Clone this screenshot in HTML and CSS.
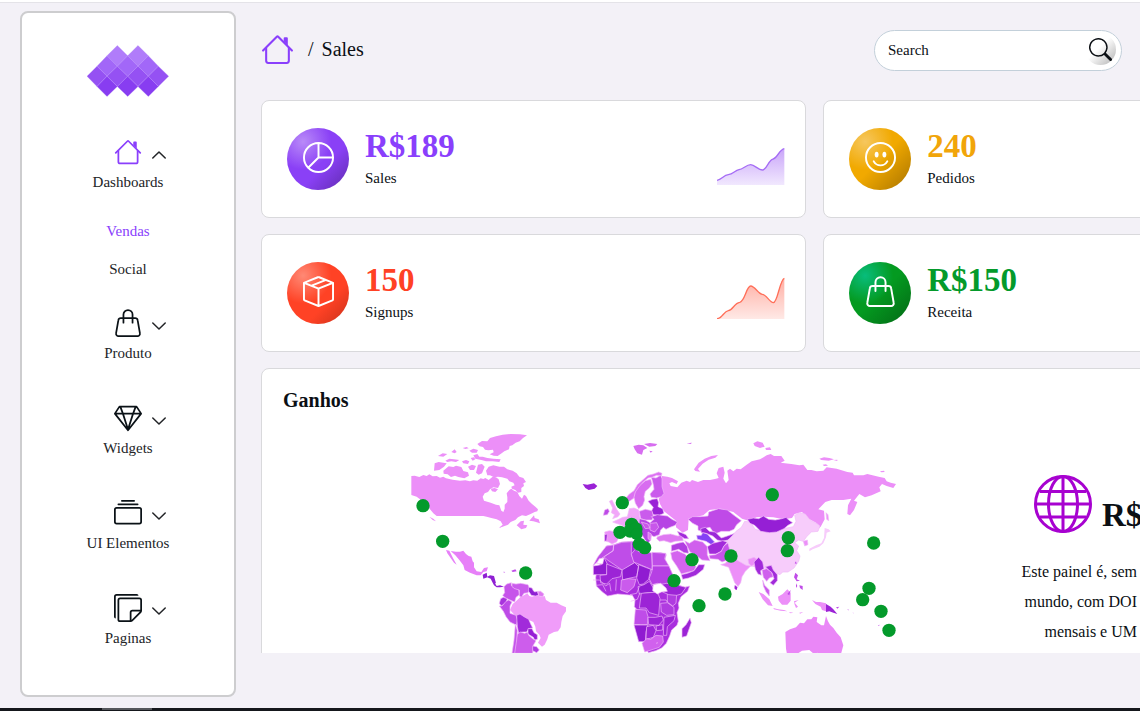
FILE: index.html
```html
<!DOCTYPE html>
<html lang="pt-BR">
<head>
<meta charset="utf-8">
<meta name="viewport" content="width=device-width, initial-scale=1">
<title>Sales</title>
<link rel="stylesheet" href="styles.css">
</head>
<body>
<svg class="sprite" aria-hidden="true">
  <symbol id="house" viewBox="0 0 16 16"><path d="M2 13.5V7h1v6.5a.5.5 0 0 0 .5.5h9a.5.5 0 0 0 .5-.5V7h1v6.5a1.5 1.5 0 0 1-1.5 1.5h-9A1.5 1.5 0 0 1 2 13.5zm11-11V6l-2-2V2.5a.5.5 0 0 1 .5-.5h1a.5.5 0 0 1 .5.5z"/><path d="M7.293 1.5a1 1 0 0 1 1.414 0l6.647 6.646a.5.5 0 0 1-.708.708L8 2.207 1.354 8.854a.5.5 0 1 1-.708-.708L7.293 1.5z"/></symbol>
  <symbol id="bag" viewBox="0 0 16 16"><path fill="none" stroke="currentColor" stroke-linecap="round" stroke-linejoin="round" d="M3.9 5.2h8.2a1.4 1.4 0 0 1 1.4 1.2l1.3 7.4a1.4 1.4 0 0 1-1.4 1.7H2.6a1.4 1.4 0 0 1-1.4-1.7l1.3-7.4a1.4 1.4 0 0 1 1.4-1.2zM5.4 7.8V3.2a2.6 2.6 0 0 1 5.2 0v4.6"/></symbol>
  <symbol id="gem" viewBox="0 0 16 16"><path fill="none" stroke="currentColor" stroke-linejoin="round" d="M3.1 1.5h9.8l2.6 4L8 15 .5 5.5zM.5 5.5h15M3.6 1.5l1.5 4L8 14.6l2.9-9.1 1.5-4"/></symbol>
  <symbol id="stack" viewBox="0 0 16 16"><path d="M2.5 3.5a.5.5 0 0 1 0-1h11a.5.5 0 0 1 0 1h-11zm2-2a.5.5 0 0 1 0-1h7a.5.5 0 0 1 0 1h-7zM0 13a1.5 1.5 0 0 0 1.5 1.5h13A1.5 1.5 0 0 0 16 13V6a1.5 1.5 0 0 0-1.5-1.5h-13A1.5 1.5 0 0 0 0 6v7zm1.5.5A.5.5 0 0 1 1 13V6a.5.5 0 0 1 .5-.5h13a.5.5 0 0 1 .5.5v7a.5.5 0 0 1-.5.5h-13z"/></symbol>
  <symbol id="notes" viewBox="0 0 16 16"><path d="M1.5 0A1.5 1.5 0 0 0 0 1.5V13a1 1 0 0 0 1 1V1.5a.5.5 0 0 1 .5-.5H14a1 1 0 0 0-1-1H1.5z"/><path d="M3.5 2A1.5 1.5 0 0 0 2 3.5v11A1.5 1.5 0 0 0 3.5 16h6.086a1.5 1.5 0 0 0 1.06-.44l4.915-4.914A1.5 1.5 0 0 0 16 9.586V3.5A1.5 1.5 0 0 0 14.5 2h-11zM3 3.5a.5.5 0 0 1 .5-.5h11a.5.5 0 0 1 .5.5V9h-4.5A1.5 1.5 0 0 0 9 10.5V15H3.5a.5.5 0 0 1-.5-.5v-11zm7 11.293V10.5a.5.5 0 0 1 .5-.5h4.293L10 14.793z"/></symbol>
  <symbol id="chevron" viewBox="0 0 14 14"><path fill="none" stroke="currentColor" stroke-width="1.5" stroke-linecap="round" stroke-linejoin="round" d="M.8 4 7 10l6.2-6"/></symbol>
  <symbol id="pie" viewBox="0 0 16 16"><path fill="none" stroke="currentColor" d="M8 .5a7.5 7.5 0 1 0 0 15 7.5 7.5 0 0 0 0-15zM8 .5V8h7.5M8 8l-5.3 5.3"/></symbol>
  <symbol id="smile" viewBox="0 0 16 16"><circle cx="8" cy="8" r="7.5" fill="none" stroke="currentColor"/><path fill="none" stroke="currentColor" stroke-linecap="round" d="M4.500 10a4 4 0 0 0 7 0"/><ellipse cx="6" cy="6.500" rx="1" ry="1.500"/><ellipse cx="10" cy="6.500" rx="1" ry="1.500"/></symbol>
  <symbol id="box" viewBox="0 0 16 16"><path d="M8.186 1.113a.5.5 0 0 0-.372 0L1.846 3.5l2.404.961L10.404 2l-2.218-.887zm3.564 1.426L5.596 5 8 5.961 14.154 3.5l-2.404-.961zm3.25 1.7-6.5 2.6v7.922l6.5-2.6V4.24zM7.5 14.762V6.838L1 4.239v7.923l6.5 2.6zM7.443.184a1.5 1.5 0 0 1 1.114 0l7.129 2.852A.5.5 0 0 1 16 3.5v8.662a1 1 0 0 1-.629.928l-7.185 2.874a.5.5 0 0 1-.372 0L.63 13.09a1 1 0 0 1-.63-.928V3.5a.5.5 0 0 1 .314-.464L7.443.184z"/></symbol>
  <symbol id="lens" viewBox="0 0 16 16"><path d="M11.742 10.344a6.5 6.5 0 1 0-1.397 1.398c.03.04.062.078.098.115l3.85 3.85a1 1 0 0 0 1.415-1.414l-3.85-3.85a1.007 1.007 0 0 0-.115-.1zM12 6.5a5.5 5.5 0 1 1-11 0 5.5 5.5 0 0 1 11 0z"/></symbol>
  <symbol id="globe" viewBox="0 0 58 58"><g fill="none" stroke="currentColor" stroke-width="3"><circle cx="29" cy="29" r="27.5"/><ellipse cx="29" cy="29" rx="14.5" ry="27.5"/><path d="M29 1v56M1 29h56M6 16.500h46M6 42h46"/></g></symbol>
</svg>

<div class="topline"></div>
<div class="layout">
  <aside class="sidebar">
    <svg class="logo" viewBox="262 136 246 155" role="img" aria-label="Logo">
      <g stroke="#b588fb" stroke-width="1">
        <path fill="#b07cfa" d="M353 137l31 31-31 31-31-31zM415 137l31 31-31 31-31-31z"/>
        <path fill="#a267f8" d="M322 168l31 31-31 30-30-30zM384 168l31 31-31 30-31-30zM446 168l30 31-30 30-31-30z"/>
        <path fill="#9551f3" d="M292 199l30 30-30 31-30-31zM353 199l31 30-31 31-31-31zM415 199l31 30-31 31-31-31zM476 199l31 30-31 31-30-31z"/>
        <path fill="#883df1" d="M322 229l31 31-31 30-30-30zM384 229l31 31-31 30-31-30zM446 229l30 31-30 30-31-30z"/>
      </g>
    </svg>
    <nav>
      <ul class="menu">
        <li class="item open">
          <button class="entry" type="button" aria-expanded="true"><svg class="icon accent"><use href="#house"/></svg><svg class="chevron up"><use href="#chevron"/></svg><span>Dashboards</span></button>
          <ul class="submenu">
            <li><a class="current" href="#vendas">Vendas</a></li>
            <li><a href="#social">Social</a></li>
          </ul>
        </li>
        <li class="item"><button class="entry" type="button"><svg class="icon"><use href="#bag"/></svg><svg class="chevron"><use href="#chevron"/></svg><span>Produto</span></button></li>
        <li class="item"><button class="entry" type="button"><svg class="icon"><use href="#gem"/></svg><svg class="chevron"><use href="#chevron"/></svg><span>Widgets</span></button></li>
        <li class="item"><button class="entry" type="button"><svg class="icon"><use href="#stack"/></svg><svg class="chevron"><use href="#chevron"/></svg><span>UI Elementos</span></button></li>
        <li class="item"><button class="entry" type="button"><svg class="icon"><use href="#notes"/></svg><svg class="chevron"><use href="#chevron"/></svg><span>Paginas</span></button></li>
      </ul>
    </nav>
  </aside>

  <main class="main">
    <header class="header">
      <div class="crumbs"><a href="#home" aria-label="Home"><svg class="home"><use href="#house"/></svg></a><span>/</span><span>Sales</span></div>
      <form class="search">
        <input type="text" placeholder="Search" aria-label="Search">
        <button type="button" aria-label="Buscar"><svg><use href="#lens"/></svg></button>
      </form>
    </header>

    <div class="grid">
      <section class="card purple">
        <span class="orb"><svg><use href="#pie"/></svg></span>
        <div class="figures"><strong>R$189</strong><span>Sales</span></div>
        <svg class="spark" viewBox="54 422 204 132">
          <defs><linearGradient id="fadeP" x1="0" y1="0" x2="0" y2="1"><stop offset="0" stop-color="#c9a5f9"/><stop offset="1" stop-color="#f1e8fe"/></linearGradient></defs>
          <path fill="url(#fadeP)" d="M54 540C68 538 74 524 88 523S108 510 120 508 143 493 155 493 178 509 190 509 209 480 220 477C236 474 240 448 256 445V554H54z"/>
          <path fill="none" stroke="#a56cf5" stroke-width="4" d="M54 540C68 538 74 524 88 523S108 510 120 508 143 493 155 493 178 509 190 509 209 480 220 477C236 474 240 448 256 445"/>
        </svg>
      </section>
      <section class="card amber">
        <span class="orb"><svg><use href="#smile"/></svg></span>
        <div class="figures"><strong>240</strong><span>Pedidos</span></div>
      </section>
      <section class="card red">
        <span class="orb"><svg><use href="#box"/></svg></span>
        <div class="figures"><strong>150</strong><span>Signups</span></div>
        <svg class="spark" viewBox="54 222 204 132">
          <defs><linearGradient id="fadeR" x1="0" y1="0" x2="0" y2="1"><stop offset="0" stop-color="#ffaea3"/><stop offset="1" stop-color="#ffe9e6"/></linearGradient></defs>
          <path fill="url(#fadeR)" d="M54 353C70 353 74 331 88 329S106 306 122 304C138 301 142 255 155 255S178 280 190 280 212 305 223 305C236 305 242 236 256 232V354H54z"/>
          <path fill="none" stroke="#ff6f59" stroke-width="4" d="M54 353C70 353 74 331 88 329S106 306 122 304C138 301 142 255 155 255S178 280 190 280 212 305 223 305C236 305 242 236 256 232"/>
        </svg>
      </section>
      <section class="card green">
        <span class="orb"><svg><use href="#bag"/></svg></span>
        <div class="figures"><strong>R$150</strong><span>Receita</span></div>
      </section>

      <section class="panel">
        <h2>Ganhos</h2>
        <div class="earnings">
          <svg class="map" viewBox="0 0 1500 669" role="img" aria-label="Mapa">
            <g class="land" transform="translate(0 -30)">
              <g fill="#ec8ff8" stroke="none">
                <path d="M34 168l10-1 14 4 12-6 10 3 8-5 10 6 12-1 10 5 10-3 8 5 20 4 22 3 16-1 14 3 10-3 12 1 10-7 8 2 6-3 10 6 12-10 10 2 8 6 4 14-6 12-14-2-10 6-6 8-10 4-6 10 4 12 20 6 16 6 10 2 6 16 6 4 4-10 0-12 8-8 0-14-2-12 8-10 6-4 8 6 10 4 6 12 8 8 6-12 6 4 8 14 10 10 10 8 8 8-2 6-8 2-12 6-14 6-12-2-12 6-8 8-14 6-8 8-16 6-12 4 12-10-6-10-12-6-16-4-14-4-10-2H110l-10-8-10-12-14-16-16-14-10-8-16-5z"/>
                <path d="M232 72l14-9 16 1 8-10 18-5 20-5 24-2 28 1 21 3-12 8-10 10-12 4-10 8-8 2-2 10-14 6-8 6-12 8-12-1-12-4 12-6-2-8-14 2-10-2-6-8-10-2z"/>
                <path d="M258 152l8-12 14-4 18 4 14 0 10 8 16 4 12 8 8 10 12 4 8 12-8 4 2 8-8 6 0 12-10 2-8-8-10-4-2-6 10-4-4-8-12-4-6-8-16-4-12-2-12 2-12-6-8 0z"/>
                <path d="M130 152l16-13 14 2 8-4 16 4 6 12 14 4 3 10-14 8-18-4-10-4-12 4-10-8-12-2zM102 152l2-22 12-4 14 2 10 2-8 10-14 10zM114 108l14-8 14 2-12 8zM136 122l12-6 14 2 16 2-10 6-14-2-12 2zM154 96l10-8 6 8-6 4zM188 84l12-3 6 4-10 2zM208 92l12-6 14 4-4 8-14 0zM220 106l12-4 6 8 10 0 14 4 18 2 22 2-4 8-20-2-20 0-14-4-18-4zM186 124l12-4 10 4-4 8-14-2zM204 140l12-6 12 4-6 12-12 0zM234 134l12-2 8 8-8 20-10 4-8-6zM212 114l10-2 4 6-8 4zM272 206l12-2 10 4-8 8-10-2zM350 316l12-12 10-2-2 12 12 2-4 8-14 4zM388 302l14-16 2 8 12 4 4 12-12-4-8-2zM88 290l12 6 8 8-10-4z"/>
                <path fill="#f09cf9" d="M330 570l8-18 10-8 14-14 10-4 10-6 6 8 8 2 14-4 14 4 10-2 4 12 14 8 18 0 14 8 14 6 0 12-10 14-4 18-2 16-8 12-12 2-16 8-4 14-8 16-8 6-12-12 8-14-4-10-10-10-2-14-6-14-18-8-16-8-16 2z"/>
                <path fill="#e780f8" d="M138 390l10 2 6 12 6 12 10 18-8-6-10-14-10-14zM152 393l16 2 12 0 10-3 8 10 8 6 8 2 4 14 4 4 0 14 8 12 14 2 8-12 12-2-4 12-10 2-8 10-12 0-20-8-16-8-4-14-12-16-12-14z"/>
              </g>
              <path fill="#8f1fd3" stroke="none" d="M248 464l12-6 2 12 8-4 12 2 4 14 2 8-10-2-6-12-10-4-12 4zM278 488l6 0 6 10 10-2 12 4-12 2-10 0-8-6z"/>
              <path fill="#bf4de8" stroke="none" d="M334 452l12-4 4 6-12 2zM310 455l6 1-4 2z"/>
              <path fill="#c653ea" d="M312 500l8-8 14-4 0 8 8 8 14 4 2 16-10 8-4 14-14-6-14-6-8-8 6-8z"/>
              <path fill="#ca5cec" d="M336 490l12 2 14-2 22 4 6 14-6 10-12 2-8 12-6-4 0-18-14-4-8-6z"/>
              <path fill="#8f1fd3" d="M386 502l10 2 4 8 4 4 8-2 4 12-10 2-12-2-8-12z"/>
              <path fill="#df78f2" d="M414 514l8 0 10 8-4 8-12-2z"/>
              <path fill="#a733dd" d="M302 536l8-4 12 4-4 12-14 10-6-8z"/>
              <path fill="#bd4be7" d="M298 558l8 0 12-14 8-4 10 6-6 12 0 22 18 6 4 14-2 16-20-10-12-16-8-16z"/>
              <path fill="#a12bda" d="M350 586l10-4 12 8 14 8 6 14 6 12-12 2-6 10-12 0-12 4-4-20z"/>
              <path fill="#961fd5" d="M384 626l12 0 6 12 10 6 0 14-8 2-4-8-16-10z"/>
              <path fill="#cd5dec" d="M352 642l10-6 12 4 8-4 4 10 12 10 10 6-8 14-2 24h-56l4-30z"/>
              <path fill="#c454ea" d="M346 612l6 20-2 28-6 40h-8l6-40z"/>
              <path fill="#af3ce1" d="M398 678l12 2 8 10-8 8-12-6z"/>
            </g>
            <g class="land" transform="translate(510 0)">
              <path fill="#ec8ff8" stroke="none" d="M276 138 292 140 306 144 324 154 320 162 306 156 298 160 302 168 322 172 334 158 350 152 360 156 366 150 384 156 400 150 420 150 438 146 446 144 440 130 446 114 460 110 464 128 460 146 468 160 476 150 472 122 480 116 490 124 500 116 512 118 530 104 545 94 570 88 590 76 602 72 612 78 634 78 644 92 632 98 664 102 688 106 700 104 712 120 724 120 740 124 760 122 770 112 800 116 832 126 848 128 852 136 880 136 892 132 926 140 944 144 950 154 962 158 978 162 970 174 950 168 936 162 928 172 932 184 905 196 885 202 868 192 852 212 862 216 852 240 840 256 832 252 834 226 844 206 820 210 785 210 766 216 745 238 762 242 764 268 752 290 736 304 726 300 738 278 716 266 696 246 674 252 666 264 640 268 610 262 580 260 560 262 536 272 516 266 490 246 450 236 418 240 400 256 356 266 354 300 338 308 318 292 318 272 282 244 270 222 266 206 278 192 272 164z"/>
              <path fill="#ec8ff8" stroke="none" d="M372 118l14-20 18-12 20-8 20-3-8 8-20 6-18 12-14 16 6 8-14-2zM550 40l12-6 16 4 6 12-14 4-16-6zM586 54l14-2 4 8-16 0zM748 86l14-4 16 2 14 4-16 4-22-2zM790 90l12-1 0 4zM930 124l12-2 2 4-10 1zM758 104l10-1 6 4-12 1z"/>
              <path fill="#d76df0" stroke="none" d="M190 48l16-4 14 2 12 8-12 6-4 14-14-4-8-12zM222 42l18-3 22 3-6 6-18 2zM238 62l10 2-6 4zM350 40l16-2-4 4z"/>
              <path fill="#9a22d6" stroke="none" d="M38 162l14 2 20-4 10 8-8 8-18 4-10-6z"/>
              <path fill="#dc71f2" d="M166 206l12-14 14-10 10-18 16-14 16-14 16-4 16-6 10 4-2 8-14-2-14 6-12 2-14 12-12 16-12 18-4 14-14 10-12-2z"/>
              <path fill="#d86cf0" d="M196 186l14-20 16-14 16-4 4 14-8 12-12 10-4 16 2 10-6 16-12 10-10-16-4-18z"/>
              <path fill="#ca5bec" d="M244 142l14 2 14-8 4 10 0 24 6 20-8 10-14 4-16-2-4-10 12-14-2-14z"/>
              <path fill="#f2a6f9" d="M118 214l8-4 6 12 8 16 10 14-6 8-16 6 6-12-10-6 4-14zM128 276l18-8 12-6 14-2 6-24 14-2 14 6 4 24-2 14 4 16-18 10-22-2-6-10-14-8-14-4z"/>
              <path fill="#bd4be7" d="M104 240l10-4 4 8-6 10-12 2z"/>
              <path fill="#ec8ff8" d="M104 306l14-4 20 4 20 6-12 10-6 14-14 6-10-6-8-2zM196 286l12 12 12 14 4 10-12-6-12-14z"/>
              <path fill="#9a22d6" d="M104 314l8-2-2 20-6 2zM234 214l14-6 14-2 4 12-2 12 14 6 4 14-14 6-18-2-6-10 6-12z"/>
              <path fill="#ca5bec" d="M208 244l18-6 20 4 4 16-4 12-20 0-14-4z"/>
              <path fill="#b644e4" d="M208 266l18 4 14 8 12-10-8-8 18-6 30 4 14 10 16 8-6 10-16 6-12 6-8-6-8 8-4 14-16 6-8-4-2 14-8 10-10-12-8-14-10-16z"/>
              <path fill="#c857ea" d="M214 276l20 6 6 12-14 2zM240 280l20-2 6 14-12 14-14-6z"/>
              <path fill="#df78f2" d="M234 306l10 6-2 20-8-6zM262 320l18-6 22-2 22 6 12-4 4 18-24 2-14 4-20-6-14 2-8-8z"/>
              <path fill="#a12bda" d="M322 304l12 4 14 6 8 12-12 0-16-10z"/>
              <path fill="#bf4ae7" d="M354 268l14-8 22 0 24-2 2-12 30-10 26 4 20 16 22 16-14 12-8 14-14 6-24 0-14 6-12-6-8-12-20 4-2 10-14-6 0-12-16-8z"/>
              <path fill="#9a28d8" d="M392 296l14-4 12 12 18 2 18 18 18-6 22-8-2 10-18 10-18 4-14-4-14-12-20-8-14-2z"/>
              <path fill="#8442f5" d="M380 316l14 0 4-8 14 4 14 16 8 8-10 8-16-10-26-6z"/>
              <path fill="#a12bda" d="M412 350l16-10 16-4 14-4 14 4-10 12-8 16-16 8-20 0z"/>
              <path fill="#c653ea" d="M418 376l18-2 18-10 8-16 12-10 12 16-8 20-6 16-16 6-12-8-24-2z"/>
              <path fill="#d05fed" d="M344 332l14 8 16-10 24 6 14 14 0 24 8 18-24-2-18-14-18-10-8-16z"/>
              <path fill="#b13de1" d="M304 346l18-6 18-4 12 14 4 20-14-2-16-10-22 6z"/>
              <path fill="#d464ef" d="M302 368l20-6 22 10 18 16 16 22-6 12-24 6-14 4-14-24-14-20z"/>
              <path fill="#a12bda" d="M334 434l18-4 20-8 14-18 18 0-4 14-22 18-22 8-18 4z"/>
              <path fill="#ec8ff8" d="M452 404l14-4 10-12 2-16 10-12 14 8 14 14 22 6 14-4 8 14-18 10-16 16-10 16-4 18-8 12-10-12-10-26-8-20z"/>
              <path fill="#a12bda" d="M496 466l6 6-4 8-4-6zM506 374l16 4 12 6-12 2z"/>
              <!-- Africa -->
              <g transform="translate(-6 0)">
                <path fill="#a92fde" d="M115 348l22-4 24-8 32-2 8 10-2 12 18 10 34 4 28-2 16 6-4 14 14 26 12 26 8 22 24 10 16-4-6 16-20 16-8 20 2 14-6 14 4 26-4 12-16 14-6 18-10 22-14 14-18 8-22 6-10-20-8-26-10-30 6-26-6-20-14-16 2-20-8-14-20-2-24-2-30 6-16-12-18-18-2-26 6-30 12-16z"/>
                <path fill="#bf4de8" d="M115 348l22-3-2 18-26 16-34 28 14-26zM137 345l24-8 29-2 0 40 10 22-36 24-44-30-12-10 28-20zM252 367l42 3-4 16 13 22h-50zM202 538l32 2 6 20-2 24h-40z"/>
                <path fill="#b640e4" d="M190 372l12-14 16 10 32 0 3 52-8-4-48-20zM253 408h50l12 28-12 22-20 10-14-8-16 4-10-18 8-20z"/>
                <path fill="#901bd1" d="M76 408l24-4 2-18 8 0 8 16-2 32-40 0zM162 420l38-22 12 12-6 30-20 4-22 6zM212 404l36 14-6 30-16 14-12 2-8-20zM210 470l18-6 16-10 20 34-24 0-26 4zM198 585h42l-6 20-2 30-20 0z"/>
                <path fill="#9c24d6" d="M116 402l46 18-4 20-26 6-16 16-18-4-2-22 20-2zM220 490l48-4 8 20-4 50-28-8-10-14-20 0zM240 562l22 0 20-4 4 12-14 16-30-2zM236 590l20-4 8 16-8 20-22 6zM264 588l20-4 0 16-18 2zM288 562l34-6-4 16-20 18-2 26-10 0z"/>
                <path fill="#ca5bec" d="M160 450l22-4 22 2-6 22-20 18-20-8z"/>
                <path fill="#b03ce0" d="M298 492l28 0-2 28-10 8-16-12zM278 520l20-2 20 14 0 22-22 2-16-10z"/>
                <path fill="#d161ee" d="M222 640l14-14 12 2 16-12 20 2 2 18-12 16-18 6-26 8z"/>
                <path fill="#9c24d6" d="M274 464l22-4 26 4 32 8-14 20-14 4-24-2-18-8 4-14zM366 564l4 14-14 40-14 4 0-26 12-12z"/>
                <path fill="#fff" d="M256 464l22-4 16 14 4 10-18 2-12 6-14-10zM86 400l8-14 14-2-4 18z"/>
                <path fill="none" d="M75 450h20l18 18 12-8 4 24M84 466l20-2 10 20M145 448l-2 34M186 494l20-4 8-20M188 514l20-6 8-20M276 510h18l4 6M264 640l6-2"/>
              </g>
            </g>
            <g class="land" transform="translate(900 0)">
              <path fill="#f7ccfb" d="M82 332l14-14 12-14 16-12 10-18 16 2 16 22 36 10 28-4 20-8 30-6 8-16-4-18 14-8 18 4 14 18 20 10 10 8-6 16-20 2-14 14-10 14-14-4-12 8 12 10-6 14 10 16-4 16-14 20-18 12-16 0-8 8-14-6-20-4-18-14-22 0-28-4-24-14-20-14z"/>
              <path fill="#951fd5" d="M142 268l18-4 16 2 14-8 16 10 20 2 20-4 12-4 8 8 12 8-14 8-12 10-22 10-22 2-26-4-18-18-14-6z"/>
              <path fill="#f7ccfb" stroke="none" d="M374 294l12 4 6 6-12 4-2 14-8 18-12 10-20 8-10 6 0-8 20-10 16-6 8-16z"/>
              <path fill="#ec8ff8" d="M378 248l6 6 2 18-6-4zM310 334l12-4 2 14-10 4zM144 388l18-6 10 6-6 14-12 6-8-8z"/>
              <path fill="#a12bda" d="M162 396l14-14 12 14 4 20-10 6 2 14-10-4-8-14z"/>
              <path fill="#cf60ed" d="M186 420l14-4 14 10 6 14-12 4-8 10-10-12z"/>
              <path fill="#a12bda" d="M196 410l18-4 6 14 12 14 0 18-12 14-10-8 12-12-6-18-10-8z"/>
              <path fill="#ca5bec" d="M188 450l6 16 14 14 0 18-10-12-8-18z"/>
              <path fill="#ec8ff8" stroke="none" d="M176 486l14 6 18 16 10 20-14-2-16-18zM220 534l14 4 18 2 10 4-20-2-20-4zM234 500l14-8 14-14 10 10 0 24-10 12-16 0-10-12zM282 514l14-4-12 8 10 12-6 4-4-10zM336 510l12 6 12 0 18 4 0 24-12-4-4-10-16-8zM266 546l14 2-8 2zM298 548l12-2-10 5z"/>
              <path fill="#9c24d6" stroke="none" d="M378 522l14 8 8 8 12 14-12-4-12-4-10 2zM104 466l8 6-2 8-6-4z"/>
              <path fill="#c04de8" stroke="none" d="M286 428l8 8-4 12 10 4-10 2-8-12zM298 466l10 2 0 12-8-6zM288 460l4 8-4 6zM284 400l4-6 2 8zM408 532l10-2-6 6zM262 492l10-12-4 16z"/>
              <path fill="#ea87f7" stroke="none" d="M256 606l14-8 18-6 12-14 12 2 10-12 12 0 6-8 12 2-2 14 14 10 8 0 6-28 6 16 6 10 10 10 10 14 12 14 8 24-6 22-8 14H364l-12-14-10 4-14-12-22 2-18 12-26 4-4-22z"/>
              <path fill="#c956ec" stroke="none" d="M534 586l6-2-4 4zM442 538l6 2-4 1zM458 548l4 1-3 1zM514 666l6 2z"/>
            </g>
            <g class="pins">
              <circle cx="69" cy="227" r="20"/><circle cx="128" cy="334" r="20"/><circle cx="377" cy="429" r="20"/>
              <circle cx="667" cy="218" r="20"/><circle cx="660" cy="307" r="20"/><circle cx="695" cy="283" r="20"/><circle cx="690" cy="303" r="20"/><circle cx="708" cy="297" r="20"/><circle cx="710" cy="312" r="18"/><circle cx="718" cy="343" r="20"/><circle cx="734" cy="353" r="20"/>
              <circle cx="876" cy="389" r="20"/><circle cx="822" cy="452" r="20"/><circle cx="897" cy="527" r="20"/><circle cx="975" cy="492" r="20"/><circle cx="993" cy="378" r="20"/>
              <circle cx="1117" cy="194" r="20"/><circle cx="1165" cy="323" r="20"/><circle cx="1162" cy="362" r="20"/><circle cx="1421" cy="339" r="20"/><circle cx="1407" cy="475" r="20"/><circle cx="1388" cy="509" r="20"/><circle cx="1443" cy="544" r="20"/><circle cx="1467" cy="601" r="20"/>
            </g>
          </svg>
          <div class="info">
            <div class="total"><svg><use href="#globe"/></svg><strong>R$</strong></div>
            <p>Este painel é, sem<br>mundo, com DOI<br>mensais e UM</p>
          </div>
        </div>
      </section>
    </div>
  </main>
</div>
<div class="scrollbar"><div class="thumb"></div></div>
</body>
</html>
```

FILE: styles.css
```css
* { box-sizing: border-box; }

body {
  margin: 0;
  height: 100vh;
  display: flex;
  flex-direction: column;
  overflow: hidden;
  background: #f3f1f7;
  color: #0b0f14;
  font: 15px/20px "Liberation Serif", "Times New Roman", serif;
}

button, input { font: inherit; color: inherit; border: 0; padding: 0; background: none; }
a { color: inherit; text-decoration: none; }
ul { list-style: none; margin: 0; padding: 0; }
svg { display: block; fill: currentColor; }
.sprite { position: absolute; width: 0; height: 0; }

.topline { flex: none; height: 3px; background: #fff; border-bottom: 1px solid #e4e3e8; }

.layout { flex: 1; min-height: 0; display: flex; gap: 25px; padding-left: 20px; }

/* Sidebar */
.sidebar {
  flex: none;
  width: 216px;
  margin: 8px 0 11px;
  padding-top: 32px;
  border: 2px solid #cdcdcf;
  border-radius: 8px;
  background: #fff;
  color: #222427;
}
.logo { width: 82px; height: 52px; margin: 0 auto; }
.item { padding-top: 41px; }
.item.open + .item { padding-top: 30px; }
.entry {
  width: 100%;
  display: grid;
  grid-template-columns: 1fr 28px 1fr;
  column-gap: 10px;
  row-gap: 6px;
  align-items: center;
}
.entry span { grid-column: 1 / -1; text-align: center; }
.icon { grid-column: 2; width: 28px; height: 28px; color: #0b1217; }
.icon.accent, .current, .home { color: #8a3ffc; }
.chevron { width: 14px; height: 14px; margin-top: 5px; }
.chevron.up { transform: scaleY(-1); }
.submenu { display: grid; gap: 18px; padding-top: 29px; text-align: center; }

/* Main */
.main { flex: 1; min-width: 0; margin-bottom: 55px; padding-top: 27px; overflow: hidden; }
.header { display: flex; justify-content: space-between; align-items: center; padding-right: 18px; margin-bottom: 29px; }
.crumbs { display: flex; align-items: center; gap: 8px; padding-bottom: 3px; font-size: 20px; }
.crumbs a { margin-right: 6px; }
.home { width: 33px; height: 33px; }
.search {
  display: flex;
  align-items: center;
  width: 248px;
  height: 41px;
  padding: 0 5px 2px 13px;
  border: 1px solid #c3d0da;
  border-radius: 21px;
  background: #fff;
}
.search input { flex: 1; min-width: 0; outline: 0; }
.search input::placeholder { color: #0b0f14; opacity: 1; }
.search button {
  width: 31px;
  height: 31px;
  padding: 4px;
  border-radius: 16px;
  background: linear-gradient(135deg, #fff 45%, #b0b0b0);
}
.search button svg { width: 23px; height: 23px; }

.grid { display: grid; grid-template-columns: 1fr 1fr; gap: 16px 17px; width: 126%; }
.card, .panel { border: 1px solid #d9d9dc; border-radius: 8px; background: #fff; }
.card { display: flex; align-items: center; gap: 16px; height: 118px; padding: 27px 20px 27px 25px; }
.orb {
  width: 62px;
  height: 62px;
  display: grid;
  place-items: center;
  border-radius: 50%;
  color: #fff;
}
.orb svg { width: 31px; height: 31px; margin-bottom: 3px; }
.figures { display: grid; padding-top: 2px; }
.figures strong { font-size: 33px; line-height: 36px; }
.figures span { line-height: 28px; }
.purple strong { color: #8a3ffc; }
.amber strong { color: #f1a50a; }
.red strong { color: #ff4124; }
.green strong { color: #049a2b; }
.purple .orb { background: radial-gradient(circle at 26% 22%, #b98af8, transparent 42%), linear-gradient(135deg, #8a40f6 60%, #5f2bad); }
.amber .orb { background: radial-gradient(circle at 26% 22%, #f6c75f, transparent 42%), linear-gradient(135deg, #f1a900 50%, #b47c00 92%); }
.red .orb { background: radial-gradient(circle at 26% 22%, #ff8975, transparent 42%), linear-gradient(135deg, #ff4225 65%, #c93019); }
.green .orb { background: radial-gradient(circle at 26% 22%, #08bd7c, transparent 42%), linear-gradient(135deg, #049a20 50%, #036815); }
.spark { width: 68px; height: 44px; margin: 0 0 5px auto; align-self: flex-end; }

.panel { grid-column: 1 / -1; padding: 19px 21px; }
.panel h2 { margin: 0; font-size: 20px; line-height: 24px; }
.earnings { display: flex; align-items: flex-start; gap: 120px; padding-left: 117px; }
.map { flex: none; width: 500px; height: 223px; margin-top: 18px; }
.land { stroke: #f0b9f8; stroke-width: 2; stroke-linejoin: round; }
.pins { fill: #049a2b; }
.info { flex: none; width: 117px; margin-top: 63px; text-align: right; font-size: 16px; line-height: 30px; white-space: nowrap; }
.total { display: flex; align-items: flex-end; gap: 10px; padding-left: 14px; }
.total svg { flex: none; width: 58px; height: 58px; color: #a702d0; }
.total strong { font-size: 33px; line-height: 36px; }
.info p { margin: 24px 0 0; }

.scrollbar { flex: none; height: 3px; padding-left: 102px; background: #15171c; }
.thumb { width: 50px; height: 2px; background: #55575c; }
```
